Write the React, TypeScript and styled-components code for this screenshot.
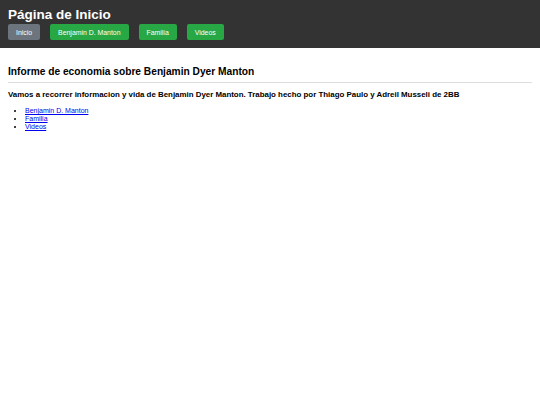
import styled, { createGlobalStyle } from 'styled-components';

const GlobalStyle = createGlobalStyle`
  html, body {
    margin: 0;
    padding: 0;
    background: #ffffff;
    font-family: "Liberation Sans", Arial, sans-serif;
  }
`;

const Header = styled.header`
  background-color: #333333;
  color: #ffffff;
  padding: 7px 8px 8px;
  height: 48px;
  box-sizing: border-box;
`;

const Title = styled.h1`
  margin: 0 0 1px;
  font-size: 13.5px;
  font-weight: 700;
  line-height: 16px;
`;

const Nav = styled.nav`
  display: flex;
  gap: 10px;
`;

const NavButton = styled.a<{ active?: boolean }>`
  display: inline-flex;
  align-items: center;
  justify-content: center;
  height: 16px;
  padding: 0 8px;
  border-radius: 2px;
  background-color: ${p => (p.active ? '#6c757d' : '#28a745')};
  color: #ffffff;
  font-size: 6.9px;
  text-decoration: none;
`;

const Main = styled.main`
  padding: 0 8px;
`;

const SectionTitle = styled.h2`
  margin: 17px 0 0;
  padding-bottom: 4px;
  border-bottom: 1px solid #dddddd;
  font-size: 10.2px;
  font-weight: 700;
  line-height: 13px;
  color: #000000;
`;

const Intro = styled.p`
  margin: 7px 0 7px;
  font-size: 7.9px;
  font-weight: 700;
  line-height: 10px;
`;

const LinkList = styled.ul`
  margin: 0;
  padding-left: 17px;
  font-size: 7px;
  line-height: 8px;
`;

const LinkItem = styled.a`
  color: #0000ee;
`;

export default function App() {
  return (
    <>
      <GlobalStyle />
      <Header>
        <Title>Página de Inicio</Title>
        <Nav>
          <NavButton href="#" active>Inicio</NavButton>
          <NavButton href="#">Benjamin D. Manton</NavButton>
          <NavButton href="#">Familia</NavButton>
          <NavButton href="#">Videos</NavButton>
        </Nav>
      </Header>
      <Main>
        <SectionTitle>Informe de economia sobre Benjamin Dyer Manton</SectionTitle>
        <Intro>
          Vamos a recorrer informacion y vida de Benjamin Dyer Manton. Trabajo hecho por Thiago Paulo y Adreil Musseli de 2BB
        </Intro>
        <LinkList>
          <li><LinkItem href="#">Benjamin D. Manton</LinkItem></li>
          <li><LinkItem href="#">Familia</LinkItem></li>
          <li><LinkItem href="#">Videos</LinkItem></li>
        </LinkList>
      </Main>
    </>
  );
}
